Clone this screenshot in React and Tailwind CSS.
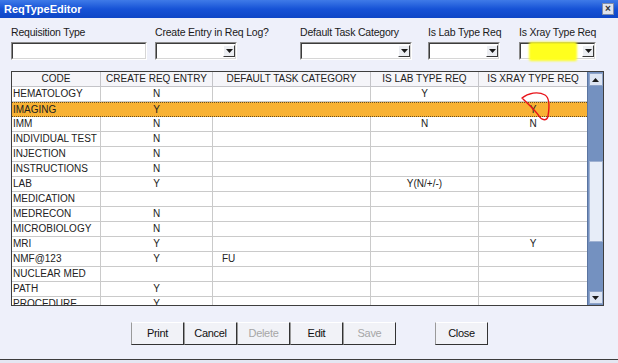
import React from 'react';

const FIELDS = [
  { label: 'Requisition Type', col: 'w-[144px]', box: 'w-[136px]', combo: false },
  { label: 'Create Entry in Req Log?', col: 'w-[145px]', box: 'w-[82px]', combo: true },
  { label: 'Default Task Category', col: 'w-[128px]', box: 'w-[112px]', combo: true },
  { label: 'Is Lab Type Req', col: 'w-[91px]', box: 'w-[72px]', combo: true },
  { label: 'Is Xray Type Req', col: 'w-[88px]', box: 'w-[77px]', combo: true },
];

const COLS = [
  { label: 'CODE', w: 'w-[89px] border-r', cell: 'pl-[1px] text-left' },
  { label: 'CREATE REQ ENTRY', w: 'w-[112px] border-r', cell: 'text-center' },
  { label: 'DEFAULT TASK CATEGORY', w: 'w-[158px] border-r', cell: 'pl-[9px] text-left' },
  { label: 'IS LAB TYPE REQ', w: 'w-[108px] border-r', cell: 'text-center' },
  { label: 'IS XRAY TYPE REQ', w: 'w-[108px]', cell: 'text-center' },
];

const ROWS = [
  ['HEMATOLOGY', 'N', '', 'Y', ''],
  ['IMAGING', 'Y', '', '', 'Y'],
  ['IMM', 'N', '', 'N', 'N'],
  ['INDIVIDUAL TEST', 'N', '', '', ''],
  ['INJECTION', 'N', '', '', ''],
  ['INSTRUCTIONS', 'N', '', '', ''],
  ['LAB', 'Y', '', 'Y(N/+/-)', ''],
  ['MEDICATION', '', '', '', ''],
  ['MEDRECON', 'N', '', '', ''],
  ['MICROBIOLOGY', 'N', '', '', ''],
  ['MRI', 'Y', '', '', 'Y'],
  ['NMF@123', 'Y', 'FU', '', ''],
  ['NUCLEAR MED', '', '', '', ''],
  ['PATH', 'Y', '', '', ''],
  ['PROCEDURE', 'Y', '', '', ''],
];

const BUTTONS = [
  { label: 'Print', disabled: false },
  { label: 'Cancel', disabled: false },
  { label: 'Delete', disabled: true },
  { label: 'Edit', disabled: false },
  { label: 'Save', disabled: true },
];

function Arrow({ down }) {
  return (
    <svg width="7" height="4" viewBox="0 0 7 4">
      <path d={down ? 'M0 0H7L3.5 4Z' : 'M0 4H7L3.5 0Z'} fill="#1a1a1a" />
    </svg>
  );
}

function Field({ f }) {
  return (
    <div className={`${f.col} flex flex-col shrink-0`}>
      <div className="h-[13px] leading-[13px] text-[10.5px] tracking-[-0.2px] text-[#1a1a1a] whitespace-nowrap">
        {f.label}
      </div>
      <div className={`${f.box} mt-[3px] h-[18px] border border-t-[#8a8a8a] border-l-[#8a8a8a] border-r-white border-b-white`}>
        <div className="h-full border border-t-[#3c3c3c] border-l-[#3c3c3c] border-r-[#d6d6d6] border-b-[#d6d6d6] bg-white flex items-center justify-end">
          {f.combo && (
            <div className="w-[12px] h-[12px] bg-[#eceef2] border border-t-white border-l-white border-r-[#3a3a3a] border-b-[#3a3a3a] flex items-center justify-center">
              <Arrow down />
            </div>
          )}
        </div>
      </div>
    </div>
  );
}

function Btn({ label, disabled, cls }) {
  return (
    <button
      type="button"
      className={`${cls} h-[23px] bg-[#f1f2f7] border border-t-white border-l-[#9a9a9a] border-r-[#333] border-b-[#333] text-[11px] tracking-[-0.3px] ${disabled ? 'text-[#a6a6a6]' : 'text-[#111]'}`}
    >
      {label}
    </button>
  );
}

export default function App() {
  return (
    <div className="relative w-[618px] h-[363px] overflow-hidden bg-[#eef0fa] font-['Liberation_Sans',Arial,sans-serif] flex flex-col">
      <div className="h-[18px] shrink-0 bg-linear-to-b from-[#3f7ae8] via-[#1652d6] to-[#0e46c6] flex items-center justify-between pl-[4px] pr-[4px]">
        <span className="text-[11px] font-bold text-white leading-none">ReqTypeEditor</span>
        <div className="w-[12px] h-[12px] bg-[#dfe3ec] border border-[#7f8ca8] flex items-center justify-center text-[10px] leading-none text-[#333] font-bold">
          ×
        </div>
      </div>

      <div className="flex pl-[11px] pt-[8px]">
        {FIELDS.map((f) => (
          <Field key={f.label} f={f} />
        ))}
      </div>

      <div className="ml-[11px] mt-[11px] w-[593px] h-[235px] shrink-0 border border-[#3e3e3e] bg-white flex overflow-hidden">
        <div className="w-[575px] flex flex-col text-[10px] text-[#222]">
          <div className="h-[15px] shrink-0 flex bg-[#f5f5f9] border-b border-[#c4c4c8]">
            {COLS.map((c) => (
              <div key={c.label} className={`${c.w} border-[#c4c4c8] text-center leading-[14px] whitespace-nowrap overflow-hidden`}>
                {c.label}
              </div>
            ))}
          </div>
          {ROWS.map((r, i) => {
            const sel = i === 1;
            return (
              <div
                key={r[0]}
                className={`h-[15px] shrink-0 flex ${sel ? 'bg-[#f8b234] border-y border-dotted border-[#6a5020]' : 'border-b border-[#cacaca]'}`}
              >
                {COLS.map((c, j) => (
                  <div
                    key={c.label}
                    className={`${c.w} ${c.cell} ${sel ? 'border-transparent' : 'border-[#cacaca]'} leading-[14px] whitespace-nowrap overflow-hidden`}
                  >
                    {r[j]}
                  </div>
                ))}
              </div>
            );
          })}
        </div>

        <div className="w-[16px] bg-[#7491c0] border-l border-[#5a74a0] flex flex-col items-center">
          <div className="mt-[1px] w-[14px] h-[13px] bg-[#dde5f3] border border-[#8ea3c8] flex items-center justify-center">
            <Arrow />
          </div>
          <div className="mt-[75px] w-[14px] h-[81px] bg-[#e7edf8] border border-[#9fb1d2]" />
          <div className="flex-1" />
          <div className="mb-[1px] w-[14px] h-[13px] bg-[#dde5f3] border border-[#8ea3c8] flex items-center justify-center">
            <Arrow down />
          </div>
        </div>
      </div>

      <div className="mt-[16px] flex pl-[131px]">
        {BUTTONS.map((b) => (
          <Btn key={b.label} label={b.label} disabled={b.disabled} cls="w-[53px]" />
        ))}
        <Btn label="Close" cls="w-[53px] ml-[39px]" />
      </div>

      <div className="mt-[14px] h-[1px] bg-[#3c3c3c] shrink-0" />
      <div className="flex-1 bg-[#e4e7f2]" />

      <div className="absolute left-[529px] top-[42px] w-[48px] h-[19px] bg-[#ffff1e] blur-[1px] rounded-[2px] pointer-events-none" />
      <svg className="absolute left-0 top-0 pointer-events-none" width="618" height="363" viewBox="0 0 618 363">
        <path
          d="M522 98C528 93 538 91 545 95C550 98 549 110 548 116C547 121 542 121 539 116C535 110 528 104 523 99"
          fill="none"
          stroke="#e8141a"
          strokeWidth="1.4"
          strokeLinecap="round"
        />
      </svg>
    </div>
  );
}
